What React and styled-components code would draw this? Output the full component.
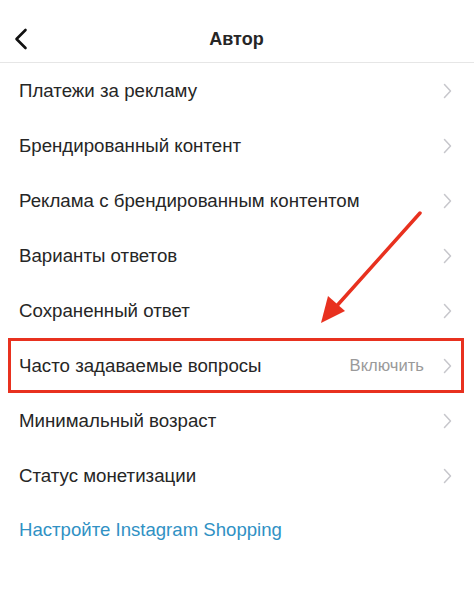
import React from 'react'
import styled, { createGlobalStyle } from 'styled-components'

const GlobalStyle = createGlobalStyle`
  html, body {
    margin: 0;
    padding: 0;
    background: #fff;
  }
  body {
    font-family: "Liberation Sans", Arial, sans-serif;
    -webkit-font-smoothing: antialiased;
  }
`

const Screen = styled.div`
  position: relative;
  width: 474px;
  height: 601px;
  background: #fff;
  overflow: hidden;
  color: #262626;
`

const Header = styled.header`
  position: relative;
  height: 63px;
  padding-top: 17px;
  display: flex;
  align-items: center;
  justify-content: center;
  border-bottom: 1px solid #e6e6e6;
  box-sizing: border-box;
`

const BackButton = styled.button`
  position: absolute;
  left: 10px;
  top: 24px;
  padding: 4px;
  border: 0;
  background: none;
  display: flex;
`

const Title = styled.h1`
  margin: 0 0 0 -1px;
  font-size: 18px;
  font-weight: 700;
  color: #262626;
`

const List = styled.ul`
  list-style: none;
  margin: 0;
  padding: 0;
`

const Row = styled.li`
  position: relative;
  height: 55px;
  display: flex;
  align-items: center;
  padding: 0 22px 0 19px;
  font-size: 18.7px;
  color: #262626;

  ${(p) =>
    p.$highlighted &&
    `
    &::after {
      content: '';
      position: absolute;
      left: 8px;
      right: 10px;
      top: 0;
      bottom: 0;
      border: 3.5px solid #e8311f;
    }
  `}
`

const Label = styled.span`
  flex: 1;
`

const Value = styled.span`
  color: #9a9a9a;
  font-size: 16.6px;
  margin-right: 19px;
`

const LinkRow = styled.a`
  display: block;
  padding: 16px 19px;
  font-size: 18.6px;
  color: #3091c4;
  text-decoration: none;
`

const Overlay = styled.svg`
  position: absolute;
  left: 0;
  top: 0;
  pointer-events: none;
`

const Chevron = () => (
  <svg width="9" height="16" viewBox="0 0 9 16">
    <path d="M1.5 1.5 L7.5 8 L1.5 14.5" fill="none" stroke="#c7c7cc" strokeWidth="1.5" strokeLinecap="round" strokeLinejoin="round" />
  </svg>
)

const items = [
  { label: 'Платежи за рекламу' },
  { label: 'Брендированный контент' },
  { label: 'Реклама с брендированным контентом' },
  { label: 'Варианты ответов' },
  { label: 'Сохраненный ответ' },
  { label: 'Часто задаваемые вопросы', value: 'Включить', highlighted: true },
  { label: 'Минимальный возраст' },
  { label: 'Статус монетизации' },
]

export default function App() {
  return (
    <>
      <GlobalStyle />
      <Screen>
        <Header>
          <BackButton aria-label="Назад">
            <svg width="14" height="22" viewBox="0 0 14 22">
              <path d="M11.5 2 L2.5 11 L11.5 20" fill="none" stroke="#111" strokeWidth="2.6" strokeLinecap="round" strokeLinejoin="round" />
            </svg>
          </BackButton>
          <Title>Автор</Title>
        </Header>
        <List>
          {items.map((it) => (
            <Row key={it.label} $highlighted={it.highlighted}>
              <Label>{it.label}</Label>
              {it.value && <Value>{it.value}</Value>}
              <Chevron />
            </Row>
          ))}
        </List>
        <LinkRow href="#">Настройте Instagram Shopping</LinkRow>
        <Overlay width="474" height="601" viewBox="0 0 474 601">
          <line x1="420" y1="213" x2="334" y2="309" stroke="#e8311f" strokeWidth="3.5" strokeLinecap="round" />
          <polygon points="321,323 328,296 345,311" fill="#e8311f" />
        </Overlay>
      </Screen>
    </>
  )
}
